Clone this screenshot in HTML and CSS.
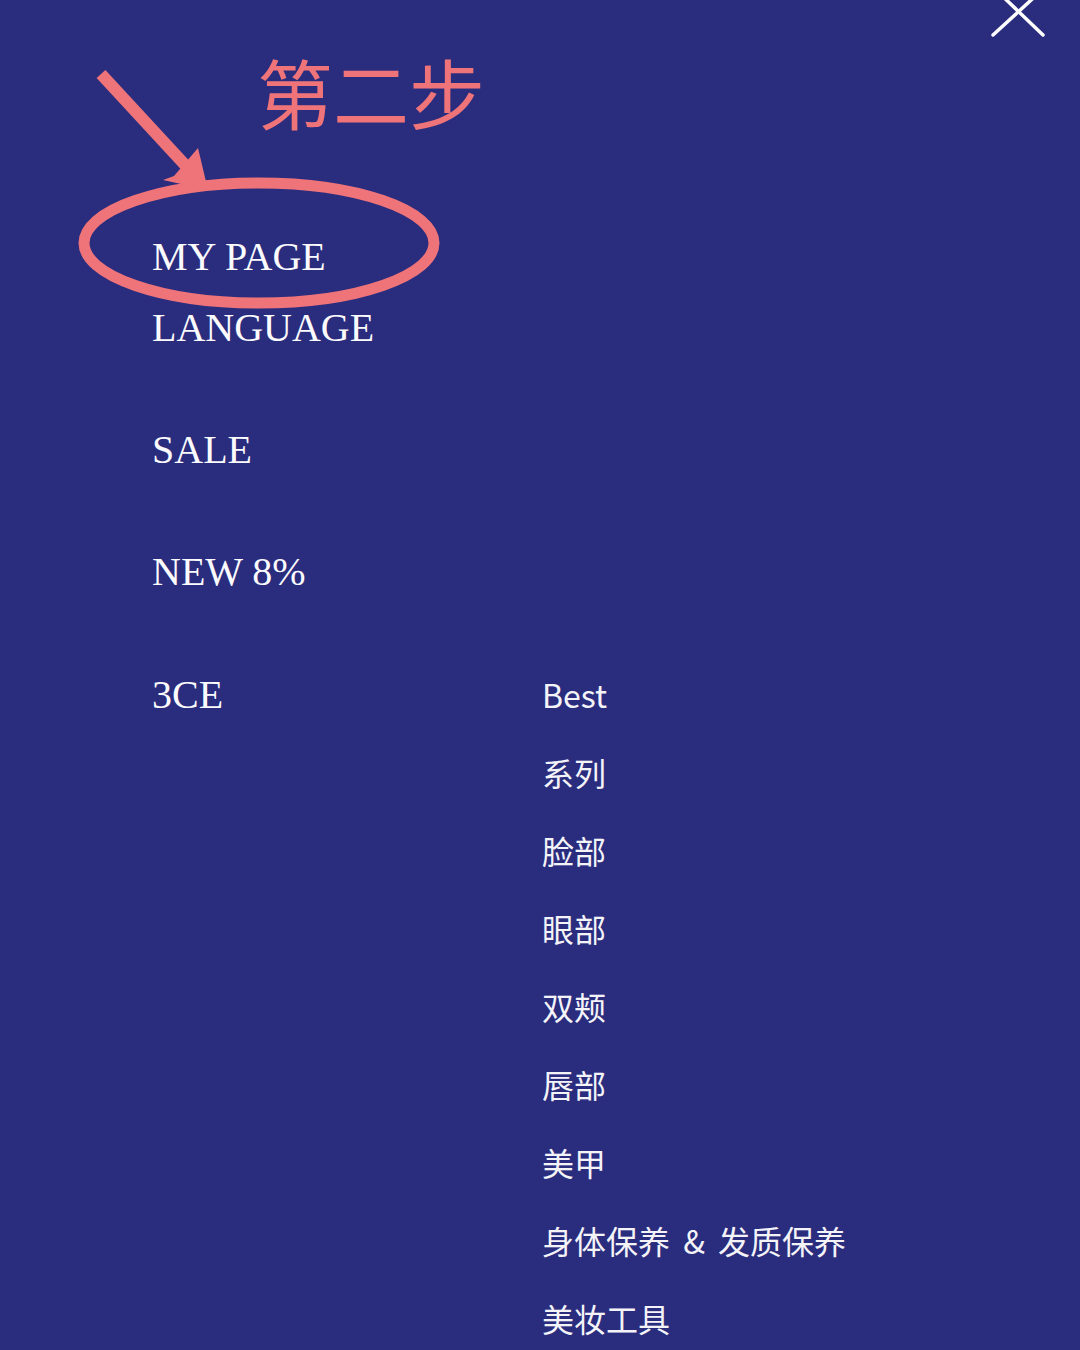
FILE: index.html
```html
<!DOCTYPE html>
<html lang="zh-CN">
<head>
<meta charset="utf-8">
<title>Menu</title>
<link rel="stylesheet" href="styles.css">
</head>
<body>
<div class="page">
  <button class="close" aria-label="Close">
    <svg width="60" height="40" viewBox="0 0 60 40">
      <path d="M5 35 L53 -9 M7 -11 L55 35" stroke="#fff" stroke-width="3.5" stroke-linecap="round" fill="none"/>
    </svg>
  </button>

  <nav class="menu">
    <div class="item mypage">MY PAGE</div>
    <div class="item lang">LANGUAGE</div>
    <div class="item sale">SALE</div>
    <div class="item new">NEW 8%</div>
    <div class="row">
      <div class="item brand">3CE</div>
      <ul class="sub">
        <li>Best</li>
        <li>系列</li>
        <li>脸部</li>
        <li>眼部</li>
        <li>双颊</li>
        <li>唇部</li>
        <li>美甲</li>
        <li class="wide">身体保养 &amp; 发质保养</li>
        <li>美妆工具</li>
      </ul>
    </div>
  </nav>

  <div class="step">第二步</div>
  <svg class="marks" width="1080" height="400" viewBox="0 0 1080 400">
    <ellipse cx="259" cy="243" rx="175" ry="60" fill="none" stroke="#ee7479" stroke-width="11"/>
    <line x1="101" y1="74" x2="186" y2="166" stroke="#ee7479" stroke-width="12"/>
    <polygon points="163,180 174,176 198,148 208,190" fill="#ee7479"/>
  </svg>
</div>
</body>
</html>
```
FILE: styles.css
```css
html, body {
  margin: 0;
  padding: 0;
}
body {
  background: #2a2c7e;
  width: 1080px;
  height: 1350px;
  overflow: hidden;
}
.page {
  position: relative;
  width: 1080px;
  height: 1350px;
  overflow: hidden;
}
.menu {
  display: flex;
  flex-direction: column;
  padding: 232px 0 0 152px;
  color: #fbfbfd;
}
.item {
  font-family: "Liberation Serif", "Times New Roman", serif;
  font-size: 40px;
  line-height: 50px;
}
.mypage { margin-bottom: 21px; }
.lang { margin-bottom: 72px; }
.sale { margin-bottom: 72px; }
.new { margin-bottom: 58px; }
.row {
  display: flex;
  align-items: baseline;
}
.brand {
  width: 390px;
  flex: none;
}
.sub {
  list-style: none;
  margin: 0;
  padding: 0;
  font-family: "Noto Sans CJK SC", "Noto Sans", sans-serif;
  font-size: 32px;
  line-height: 78px;
  color: #f4f4f8;
}
.sub li {
  white-space: nowrap;
}
.sub .wide {
  word-spacing: 6px;
}
.close {
  position: absolute;
  top: 0;
  left: 988px;
  width: 60px;
  height: 40px;
  padding: 0;
  border: 0;
  background: none;
}
.close svg { display: block; }
.step {
  position: absolute;
  left: 257px;
  top: 53px;
  font-family: "Noto Sans CJK SC", sans-serif;
  font-size: 76px;
  line-height: 1;
  color: #ee7479;
}
.marks {
  position: absolute;
  left: 0;
  top: 0;
  pointer-events: none;
}
```
